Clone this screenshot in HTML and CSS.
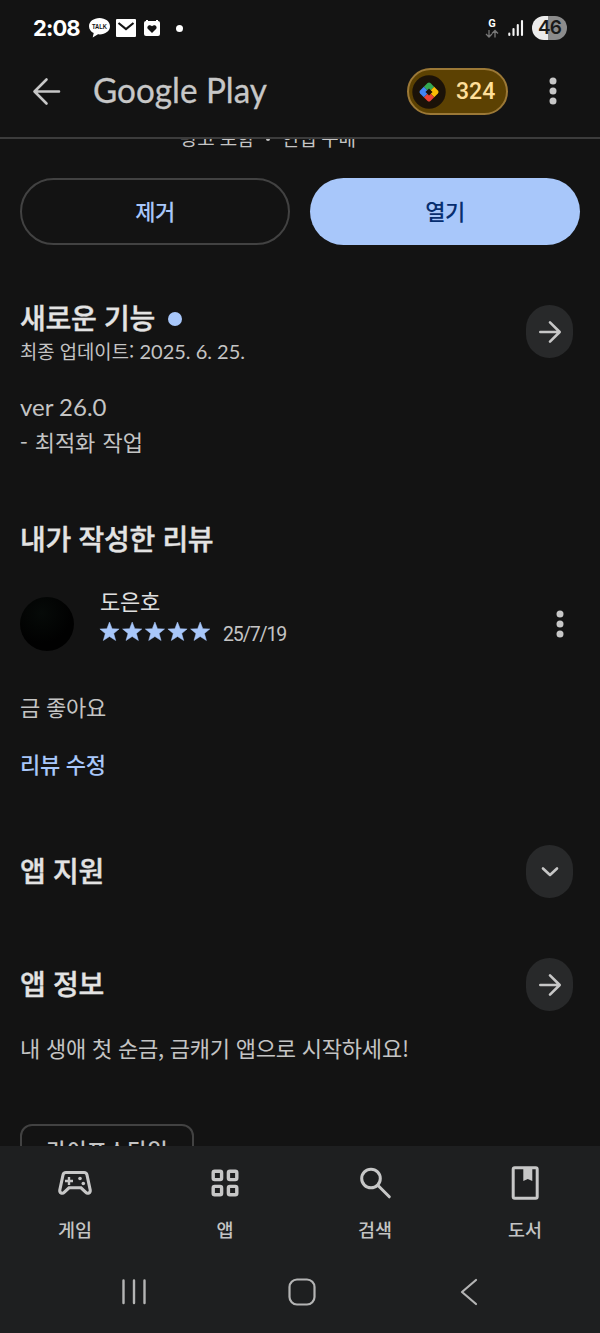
FILE: index.html
```html
<!DOCTYPE html>
<html lang="ko">
<head>
<meta charset="utf-8">
<title>Google Play</title>
<link rel="stylesheet" href="styles.css">
</head>
<body>
<header class="top">
  <div class="status">
    <span class="clock">2:08</span>
    <svg class="talk" width="21" height="20" viewBox="0 0 21 20"><path fill="#fff" d="M10.500 0C4.700 0 0 3.600 0 8.200c0 3 2 5.500 4.700 6.900L3.700 19.400 9 16.300c6.400.8 12-3 12-8.100C21 3.600 16.300 0 10.500 0z"/><text x="10.500" y="11" text-anchor="middle" textLength="15" lengthAdjust="spacingAndGlyphs" class="talk-text">TALK</text></svg>
    <svg class="mail" width="20" height="18" viewBox="0 0 20 18"><rect width="20" height="18" rx="1" fill="#fff"/><path d="M2.500 4l7.500 6 7.500-6" fill="none" stroke="#131313" stroke-width="2.200"/></svg>
    <svg class="cal" width="16" height="16" viewBox="0 0 16 16"><rect y="1" width="16" height="15" rx="2" fill="#fff"/><path fill="#fff" d="M2 0h2v2H2zM12 0h2v2h-2z"/><path fill="#131313" d="M8 13L4 9C2 6.500 5.500 3.500 8 6.200 10.500 3.500 14 6.500 12 9z"/></svg>
    <span class="more-dot"></span>
    <svg class="net" width="14" height="19" viewBox="0 0 14 19"><text x="7" y="8" text-anchor="middle" class="net-text">G</text><path d="M4 11v7M1 15l3 3 3-3M10 18.500v-7M7 14.500l3-3 3 3" fill="none" stroke="#777" stroke-width="1.300"/></svg>
    <svg class="signal" width="16" height="16" viewBox="0 0 16 16"><path d="M1.300 13.500v1.500M5.500 9v6M9.800 5v10M14 1v14" stroke="#f4f4f4" stroke-width="2.100" stroke-linecap="round"/></svg>
    <span class="battery">46</span>
  </div>
  <div class="appbar">
    <svg class="back" width="27" height="27" viewBox="0 0 27 27"><path d="M13.500 1.500l-12 12 12 12M2 13.500h24" class="line"/></svg>
    <svg class="brand" width="180" height="54" viewBox="0 0 180 54"><text x="0" y="36" textLength="174" lengthAdjust="spacingAndGlyphs" class="brand-text">Google Play</text></svg>
    <div class="points">
      <svg width="34" height="34" viewBox="0 0 34 34"><circle cx="17" cy="17" r="16.700" fill="#1b1208"/><g transform="translate(17 17) rotate(45)"><path fill="#34a853" d="M-7.300 0v-5.300q0-2 2-2H0V0z"/><path fill="#fbbc04" d="M0-7.300h5.300q2 0 2 2V0H0z"/><path fill="#ea4335" d="M7.300 0v5.300q0 2-2 2H0V0z"/><path fill="#4285f4" d="M-7.300 0v5.300q0 2 2 2H0V0z"/><rect x="-2.500" y="-2.500" width="5" height="5" fill="#1b1208"/></g></svg>
      <span>324</span>
    </div>
    <svg class="menu" width="8" height="28" viewBox="0 0 8 28"><g fill="#c7c7c7"><circle cx="4" cy="4" r="3.500"/><circle cx="4" cy="14" r="3.500"/><circle cx="4" cy="24" r="3.500"/></g></svg>
  </div>
</header>
<main class="page">
  <div class="meta">광고 포함 <i></i> 인앱 구매</div>
  <div class="actions"><button class="btn outline">제거</button><button class="btn filled">열기</button></div>
  <section class="news">
    <div class="news-head">
      <div><h2>새로운 기능<i></i></h2><p class="updated">최종 업데이트: <span class="updated-date">2025. 6. 25.</span></p></div>
      <span class="round"><svg width="22" height="22" viewBox="0 0 22 22"><path d="M11 1.300L20.700 11 11 20.700M1.300 11H20" class="line"/></svg></span>
    </div>
    <p class="notes"><span class="version">ver 26.0</span><br><span class="change">- 최적화 작업</span></p>
  </section>
  <section class="review">
    <h2>내가 작성한 리뷰</h2>
    <div class="author">
      <span class="avatar"></span>
      <div class="who"><div class="name">도은호</div>
        <div class="rating"><svg width="110" height="20" viewBox="0 0 110 20"><defs><path id="star" fill="#a8c7fa" stroke="#a8c7fa" stroke-width=".5" d="M9.500 0l2.600 6.700 7 .3-5.400 4.500 2 7-6.200-4-6.200 4 2-7L-.1 7l7-.3z"/></defs><use href="#star"/><use href="#star" x="22.700"/><use href="#star" x="45.400"/><use href="#star" x="68"/><use href="#star" x="90.700"/></svg><span>25/7/19</span></div>
      </div>
      <svg class="menu" width="8" height="28" viewBox="0 0 8 28"><g fill="#c7c7c7"><circle cx="4" cy="4" r="3.500"/><circle cx="4" cy="14" r="3.500"/><circle cx="4" cy="24" r="3.500"/></g></svg>
    </div>
    <p class="comment">금 좋아요</p>
    <a class="edit">리뷰 수정</a>
  </section>
  <section class="row support"><h2>앱 지원</h2><span class="round"><svg width="18" height="10" viewBox="0 0 18 10"><path d="M2 1.500l7 6.500 7-6.500" class="line"/></svg></span></section>
  <section class="row about"><h2>앱 정보</h2><span class="round"><svg width="22" height="22" viewBox="0 0 22 22"><path d="M11 1.300L20.700 11 11 20.700M1.300 11H20" class="line"/></svg></span></section>
  <p class="desc">내 생애 첫 순금, 금캐기 앱으로 시작하세요!</p>
  <span class="chip">라이프스타일</span>
</main>
<footer class="bottom">
  <nav class="tabs">
    <a><svg width="36" height="36" viewBox="0 0 36 36"><path d="M9 7.500h18q2.500 0 3 2.500l3.200 15c.5 3-2.600 4.200-4.600 2.200l-4.600-4.400H12l-4.600 4.400c-2 2-5.100.8-4.600-2.200L6 10q.5-2.500 3-2.500z" fill="none" stroke="#c7c7c7" stroke-width="3.100"/><path d="M12 12v8M8 16h8" stroke="#c7c7c7" stroke-width="2.400"/><circle cx="23" cy="13.500" r="1.800" fill="#c7c7c7"/><circle cx="26.300" cy="18.500" r="1.800" fill="#c7c7c7"/></svg><span>게임</span></a>
    <a><svg width="36" height="36" viewBox="0 0 36 36"><g fill="none" stroke="#c7c7c7" stroke-width="3.400"><rect x="6.200" y="6.200" width="8.400" height="8.400" rx="1.500"/><rect x="21.400" y="6.200" width="8.400" height="8.400" rx="1.500"/><rect x="6.200" y="21.400" width="8.400" height="8.400" rx="1.500"/><rect x="21.400" y="21.400" width="8.400" height="8.400" rx="1.500"/></g></svg><span>앱</span></a>
    <a><svg width="36" height="36" viewBox="0 0 36 36"><g fill="none" stroke="#c7c7c7" stroke-width="3"><circle cx="14" cy="13.500" r="9.300"/><path d="M20.800 20.300l11.500 11.500" stroke-linecap="round"/></g></svg><span>검색</span></a>
    <a><svg width="36" height="36" viewBox="0 0 36 36"><rect x="6.200" y="2.700" width="24" height="30.500" rx="1.500" fill="none" stroke="#c7c7c7" stroke-width="3"/><path d="M16.300 2h9v14l-4.500-2-4.500 2z" fill="#c7c7c7"/></svg><span>도서</span></a>
  </nav>
  <div class="system">
    <svg width="26" height="28" viewBox="0 0 26 28"><path d="M2.500 2.500v22.500M13 2.500v22.500M23.500 2.500v22.500" stroke="#b4b4b4" stroke-width="2.400" stroke-linecap="round"/></svg>
    <svg width="28" height="28" viewBox="0 0 28 28"><rect x="1.500" y="1.500" width="25" height="25" rx="7.500" fill="none" stroke="#b4b4b4" stroke-width="2.200"/></svg>
    <svg class="sys-back" width="18" height="28" viewBox="0 0 18 28"><path d="M16 2L2 14l14 12" fill="none" stroke="#b4b4b4" stroke-width="2.200" stroke-linecap="round" stroke-linejoin="round"/></svg>
  </div>
</footer>
</body>
</html>
```
FILE: styles.css
```css
* { box-sizing: border-box; margin: 0; padding: 0; }
body {
  width: 600px; height: 1333px; overflow: hidden;
  display: flex; flex-direction: column;
  background: #131313; color: #c4c4c4;
  font-family: "Noto Sans CJK KR", sans-serif;
}
svg { display: block; flex: none; overflow: visible; }
i { display: inline-block; border-radius: 50%; }
.line { fill: none; stroke: #c7c7c7; stroke-width: 2.6; stroke-linecap: round; stroke-linejoin: round; }

.top { height: 139px; border-bottom: 2px solid #3c3c3c; flex: none; }
.status { display: flex; align-items: center; height: 56px; padding: 0 33px 0 33px; }
.clock { width: 47px; font: 700 22px/28px Inter, sans-serif; letter-spacing: -0.9px; color: #fff; }
.talk { margin-left: 9px; }
.mail { margin-left: 6px; }
.cal { margin-left: 8px; }
.talk-text { font: 700 7.5px "Liberation Sans", sans-serif; fill: #131313; }
.more-dot { width: 7px; height: 7px; margin-left: 16px; border-radius: 50%; background: #fff; }
.net { margin-left: auto; }
.net-text { font: 700 11px Roboto, sans-serif; fill: #fff; }
.signal { margin-left: 9px; }
.battery {
  width: 35px; height: 24px; margin-left: 8px; border-radius: 12px; text-align: center;
  background: linear-gradient(90deg, #ececec 46%, #8c8c8c 46%);
  color: #1a1a1a; font: 600 19px/24px Inter, sans-serif; letter-spacing: -1px;
}
.appbar { display: flex; align-items: center; height: 71px; padding: 0 43px 0 33px; }
.brand { margin-left: 33px; margin-top: 4px; }
.brand-text { font: 400 35px Lato, sans-serif; fill: #c7c7c7; stroke: #c7c7c7; stroke-width: .3px; }
.points {
  display: flex; align-items: center; gap: 10px; width: 101px; height: 47px; margin-left: auto; padding-left: 3px;
  border: 2px solid #9b7836; border-radius: 24px; background: #5c4102;
  color: #ffdf99; font: 500 23px/28px Roboto, sans-serif;
}
.appbar .menu { margin-left: 41px; margin-top: -2px; }

.page { flex: 1; min-height: 0; overflow: hidden; padding: 0 20px; }
.meta { height: 24px; margin: -13px 0 0 160px; font-size: 19px; line-height: 24px; letter-spacing: -.2px; white-space: nowrap; }
.meta i { width: 4px; height: 4px; margin: 0 6px 5px 7px; background: #c4c4c4; }
.actions { display: flex; gap: 20px; margin-top: 28px; }
.btn { width: 270px; height: 67px; border: 0; border-radius: 34px; padding-bottom: 4px; font: 500 22px/60px "Noto Sans CJK KR", sans-serif; letter-spacing: -.4px; }
.outline { border: 2px solid #424242; background: none; color: #a8c7fa; }
.filled { background: #a8c7fa; color: #062e6f; }
h2 { font-size: 28px; line-height: 40px; font-weight: 500; letter-spacing: -.3px; color: #e3e3e3; -webkit-text-stroke: .4px #e3e3e3; }
.news { padding-top: 52px; }
.news-head { display: flex; justify-content: space-between; height: 70px; padding-right: 7px; }
.news-head .round { margin-top: 8px; }
h2 i { width: 14px; height: 14px; margin: 0 0 3px 13px; background: #a8c7fa; }
.updated { margin-top: 2px; font-size: 18.8px; line-height: 24px; }
.updated-date { font-family: Lato, sans-serif; font-size: 20px; }
.round { display: flex; align-items: center; justify-content: center; width: 47px; height: 53px; border-radius: 24px; background: #28292a; flex: none; }
.notes { margin-top: 22px; font-size: 22px; line-height: 34px; }
.version { font-family: Lato, sans-serif; font-size: 24px; }
.change { word-spacing: 1.2px; letter-spacing: -.1px; }
.review { margin-top: 60px; }
.author { display: flex; align-items: center; margin-top: 31px; height: 70px; padding-right: 16px; }
.avatar { width: 54px; height: 54px; border-radius: 50%; background: radial-gradient(circle at 40% 30%, #060a08, #010101 60%); }
.who { margin-left: 26px; margin-top: -18px; }
.name { font-size: 22px; line-height: 32px; letter-spacing: -.2px; color: #e0e0e0; }
.rating { display: flex; align-items: center; gap: 13px; margin-top: 1px; font: 19.5px/24px Roboto, sans-serif; letter-spacing: -1.1px; }
.rating span { margin-top: 6px; }
.author .menu { margin-left: auto; }
.comment { margin-top: 30px; font-size: 22px; line-height: 34px; letter-spacing: -.2px; }
.edit { display: block; margin-top: 23px; font-size: 22px; line-height: 34px; font-weight: 500; letter-spacing: -.3px; color: #a8c7fa; }
.row { display: flex; align-items: center; justify-content: space-between; height: 53px; padding-right: 7px; }
.support { margin-top: 65px; }
.about { margin-top: 60px; }
.row h2 { margin-top: -3px; }
.desc { margin-top: 19px; font-size: 22px; line-height: 34px; letter-spacing: -.22px; white-space: nowrap; }
.chip { display: block; width: 174px; height: 60px; margin-top: 60px; border: 2px solid #424242; border-radius: 12px; text-align: center; font-size: 22px; line-height: 46px; font-weight: 500; }

.bottom { height: 187px; background: #1e1f20; flex: none; }
.tabs { display: flex; height: 104px; padding-top: 19px; }
.tabs a { flex: 1; display: flex; flex-direction: column; align-items: center; gap: 15px; font-size: 18.5px; line-height: 26px; font-weight: 500; }
.system { display: flex; align-items: center; gap: 141px; padding: 28px 0 0 121px; }
.sys-back { margin-left: 3px; }
```
